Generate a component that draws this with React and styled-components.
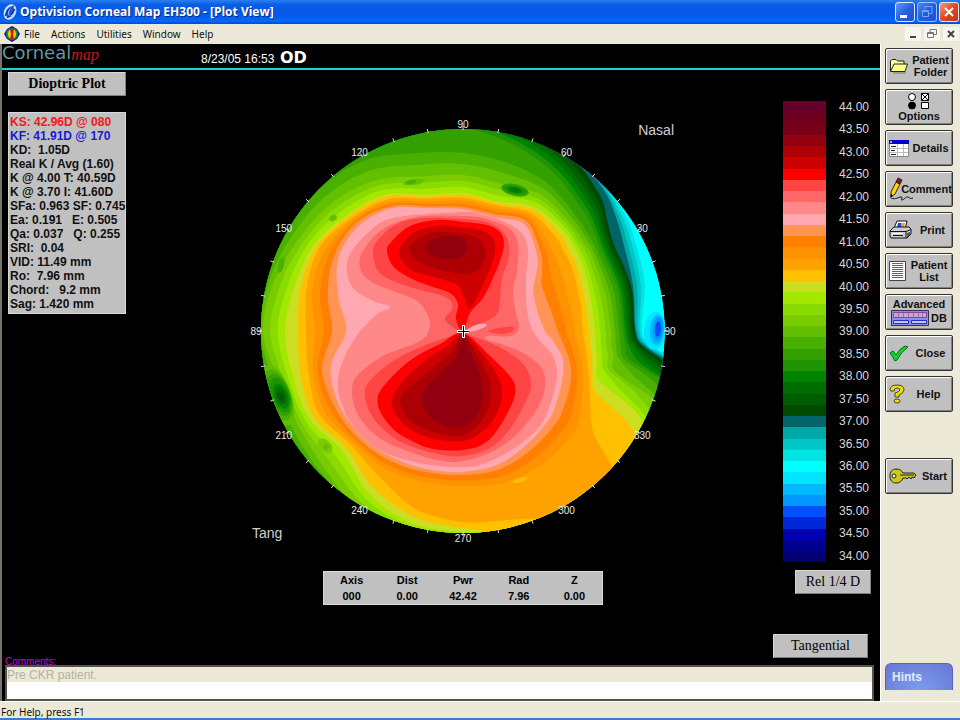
import React, { useState } from 'react';
import styled, { createGlobalStyle } from 'styled-components';

// Quarter dioptre steps, from 44.00 down to 34.00
const SCALE = [
  '#66002a', '#700020', '#7a0018', '#920010', '#ac0004', '#cc0000', '#ff0000', '#ff4444',
  '#ff6666', '#ff8888', '#ffa8b0', '#ff9454', '#ff8000', '#ff9200', '#ffa200', '#ffc000',
  '#ccdd22', '#a4e800', '#8adc00', '#7acc00', '#62c000', '#4ab000', '#34a000', '#1e9400',
  '#008400', '#006e00', '#005c00', '#004a00', '#006468', '#00a8a8', '#00c8c8', '#00e4e4',
  '#00ffff', '#00e4ff', '#00b8ff', '#0098ff', '#0050ff', '#0028d8', '#0000b0', '#000090',
  '#000070',
];

const CENTER = { x: 463, y: 330 };
const RADIUS = 202;

const ANGLES = [
  0, 15, 30, 37, 45, 60, 75, 90, 105, 120, 135, 150, 165, 180, 195, 210, 225, 240, 255, 270,
  285, 300, 315, 322, 330, 335, 340, 345, 350, 355,
];

// Distance from the apex to the outer edge of a step, one value per angle.
// Steps that are not listed are interpolated.
const RINGS = {
  10: [82, 77, 81, 91, 105, 123, 118, 122, 127, 142, 148, 144, 129, 117, 137, 144, 146, 145, 143, 141, 138, 130, 123, 118, 113, 110, 107, 103, 96, 89],
  11: [95, 90, 91, 99, 110, 127, 121, 124, 129, 144, 152, 149, 140, 131, 146, 149, 150, 149, 146, 144, 143, 137, 131, 127, 122, 119, 115, 110, 104, 99],
  13: [112, 110, 114, 117, 122, 133, 127, 130, 134, 149, 157, 160, 156, 148, 155, 160, 156, 158, 156, 155, 157, 155, 151, 147, 137, 132, 127, 123, 118, 114],
  14: [120, 121, 126, 128, 132, 136, 130, 133, 137, 152, 159, 166, 162, 157, 160, 166, 160, 168, 184, 191, 195, 212, 214, 166, 147, 140, 134, 129, 125, 122],
  15: [126, 126, 131, 133, 137, 140, 132, 136, 139, 155, 162, 169, 168, 165, 168, 172, 165, 180, 192, 197, 208, 216, 222, 214, 196, 147, 138, 134, 131, 127],
  16: [132, 132, 137, 139, 142, 143, 134, 138, 141, 157, 164, 172, 174, 178, 176, 177, 170, 188, 199, 201, 210, 218, 224, 220, 216, 190, 145, 139, 136, 133],
  19: [148, 147, 149, 150, 152, 157, 152, 156, 160, 174, 183, 188, 195, 200, 191, 190, 195, 206, 208, 208, 212, 220, 226, 224, 222, 222, 205, 158, 153, 149],
  21: [156, 156, 156, 158, 161, 170, 174, 178, 184, 197, 202, 203, 205, 206, 200, 203, 206, 210, 212, 212, 214, 222, 228, 226, 224, 224, 222, 198, 164, 158],
  22: [160, 160, 160, 164, 170, 182, 193, 203, 206, 206, 207, 208, 208, 208, 204, 208, 210, 212, 216, 216, 218, 224, 230, 228, 226, 226, 226, 215, 170, 163],
  27: [172, 174, 174, 181, 193, 208, 218, 226, 230, 230, 230, 230, 230, 230, 230, 230, 230, 230, 230, 230, 230, 230, 230, 230, 230, 230, 232, 232, 214, 181],
  28: [173, 176, 184, 191, 199, 212, 222, 230, 232, 232, 232, 232, 232, 232, 232, 232, 232, 232, 232, 232, 232, 232, 232, 232, 232, 232, 234, 234, 220, 184],
  31: [179, 188, 196, 200, 204, 222, 232, 240, 240, 240, 240, 240, 240, 240, 240, 240, 240, 240, 240, 240, 240, 240, 240, 240, 240, 240, 240, 240, 235, 193],
};

// Bow tie lobes inside the rings, largest first
const LOBES = [
  [9, [[463, 211], [393, 217], [367, 233], [350, 253], [347, 270], [353, 287], [373, 300], [390, 306], [377, 313], [365, 325], [357, 334], [345, 355], [338, 378], [340, 398], [353, 425], [377, 447], [403, 458], [437, 465], [463, 466], [483, 463], [513, 448], [540, 425], [552, 398], [557, 375], [553, 355], [540, 340], [532, 328], [527, 310], [526, 290], [526, 275], [528, 250], [522, 233], [503, 220], [483, 214]]],
  [8, [[463, 215], [417, 216], [383, 228], [363, 250], [360, 267], [370, 280], [393, 290], [417, 300], [427, 313], [430, 326], [420, 340], [383, 355], [357, 375], [352, 392], [357, 412], [373, 432], [397, 446], [437, 459], [463, 460], [493, 450], [517, 433], [537, 408], [545, 385], [540, 365], [517, 349], [488, 339], [488, 335], [510, 335], [519, 327], [516, 313], [513, 290], [517, 270], [518, 243], [510, 228], [487, 218]]],
  [7, [[463, 218], [423, 217], [397, 223], [377, 240], [373, 253], [378, 270], [393, 280], [417, 288], [437, 293], [450, 299], [452, 308], [445, 318], [454, 327], [463, 331], [475, 325], [496, 314], [500, 298], [502, 277], [509, 255], [506, 235], [490, 222]]],
  [7, [[463, 332], [423, 345], [390, 362], [368, 382], [365, 395], [370, 412], [383, 428], [403, 442], [437, 453], [463, 455], [490, 447], [510, 428], [525, 402], [531, 385], [525, 365], [503, 348], [470, 334]]],
  [7, [[488, 330], [499, 327], [513, 326], [511, 331], [500, 333]]],
  [6, [[463, 221], [437, 219], [410, 225], [392, 240], [387, 250], [393, 265], [410, 277], [430, 285], [450, 292], [458, 303], [456, 318], [463, 330], [470, 312], [483, 297], [493, 277], [500, 260], [504, 243], [500, 231], [487, 224]]],
  [6, [[463, 332], [440, 343], [412, 358], [388, 380], [378, 395], [380, 410], [393, 428], [412, 440], [433, 448], [463, 449], [485, 442], [500, 425], [513, 400], [515, 385], [508, 373], [490, 355]]],
  [5, [[463, 227], [437, 225], [413, 232], [400, 247], [402, 260], [413, 270], [437, 277], [457, 284], [465, 298], [469, 308], [480, 290], [490, 267], [495, 250], [493, 237], [480, 229]]],
  [5, [[463, 333], [447, 345], [425, 360], [403, 380], [392, 398], [395, 412], [410, 428], [433, 438], [463, 440], [483, 430], [497, 412], [502, 390], [495, 370], [480, 350]]],
  [4, [[455, 232], [430, 232], [412, 243], [411, 254], [425, 264], [450, 271], [470, 273], [483, 262], [484, 245], [475, 236]]],
  [4, [[463, 334], [452, 350], [427, 372], [402, 394], [404, 412], [418, 425], [440, 433], [463, 434], [480, 422], [490, 402], [490, 380], [478, 355]]],
  [3, [[448, 235], [430, 240], [427, 250], [440, 257], [458, 257], [467, 249], [463, 237]]],
  [3, [[463, 336], [455, 358], [440, 372], [424, 390], [423, 405], [435, 420], [452, 427], [470, 422], [482, 402], [480, 375], [470, 350]]],
  [10, [[465, 330], [476, 324], [486, 323], [485, 326], [474, 330]]],
];

// [step, cx, cy, rx, ry, rotation]
const SPOTS = [
  [20, 414, 181, 11, 3, -8], [21, 411, 181, 5, 2, -10],
  [20, 333, 217, 4, 3, -30],
  [21, 281, 264, 3, 8, 15],
  [22, 515, 189, 14, 6, 12], [23, 515, 189, 11, 4, 12], [24, 515, 189, 7, 3, 12], [25, 516, 189, 3, 1, 12],
  [20, 278, 394, 13, 32, -20], [21, 278, 394, 12, 27, -20], [22, 279, 394, 11, 22, -20],
  [23, 280, 394, 9, 18, -20], [24, 281, 395, 7, 13, -20], [25, 281, 395, 5, 9, -20], [26, 281, 396, 3, 5, -20],
  [19, 325, 445, 9, 6, 45], [20, 326, 446, 3, 3, 45],
  [15, 520, 479, 8, 2, -18],
  [33, 655, 330, 11, 19, 4], [34, 657, 329, 7, 15, 4], [35, 658, 328, 5, 12, 4], [36, 658, 328, 3, 8, 4],
];

const LEGEND_LABELS = Array.from({ length: 21 }, (_, i) => (44 - i / 2).toFixed(2));

const DIAL_LABELS = [
  [0, '90'], [30, '30'], [60, '60'], [90, '90'], [120, '120'], [150, '150'],
  [180, '89'], [210, '210'], [240, '240'], [270, '270'], [300, '300'], [330, '330'],
];

const STATS = [
  ['KS: 42.96D @ 080', '#f01818'],
  ['KF: 41.91D @ 170', '#1818d8'],
  ['KD:  1.05D'],
  ['Real K / Avg (1.60)'],
  ['K @ 4.00 T: 40.59D'],
  ['K @ 3.70 I: 41.60D'],
  ['SFa: 0.963 SF: 0.745'],
  ['Ea: 0.191   E: 0.505'],
  ['Qa: 0.037   Q: 0.255'],
  ['SRI:  0.04'],
  ['VID: 11.49 mm'],
  ['Ro:  7.96 mm'],
  ['Chord:   9.2 mm'],
  ['Sag: 1.420 mm'],
];

const READOUT = [
  ['Axis', '000'], ['Dist', '0.00'], ['Pwr', '42.42'], ['Rad', '7.96'], ['Z', '0.00'],
];

const polar = (angle, r) => {
  const a = (angle * Math.PI) / 180;
  return [CENTER.x + r * Math.cos(a), CENTER.y - r * Math.sin(a)];
};

// Closed Catmull-Rom curve through the points
const smooth = (pts) => {
  const n = pts.length;
  const at = (i) => pts[(i + n) % n];
  let d = `M${at(0)[0].toFixed(1)} ${at(0)[1].toFixed(1)}`;
  for (let i = 0; i < n; i++) {
    const [p0, p1, p2, p3] = [at(i - 1), at(i), at(i + 1), at(i + 2)];
    const c = [
      p1[0] + (p2[0] - p0[0]) / 6, p1[1] + (p2[1] - p0[1]) / 6,
      p2[0] - (p3[0] - p1[0]) / 6, p2[1] - (p3[1] - p1[1]) / 6,
      p2[0], p2[1],
    ];
    d += `C${c.map((v) => v.toFixed(1)).join(' ')}`;
  }
  return d + 'Z';
};

const ringPath = (step) => {
  const keys = Object.keys(RINGS).map(Number);
  const lo = Math.max(...keys.filter((k) => k <= step));
  const hi = Math.min(...keys.filter((k) => k >= step));
  const t = hi === lo ? 0 : (step - lo) / (hi - lo);
  return smooth(ANGLES.map((a, i) => polar(a, RINGS[lo][i] * (1 - t) + RINGS[hi][i] * t)));
};

const RING_STEPS = Array.from({ length: 22 }, (_, i) => 31 - i);

const CornealPlot = () => (
  <PlotSvg viewBox="252 120 422 421" role="img" aria-label="Corneal map">
    <defs>
      <clipPath id="cornea">
        <circle cx={CENTER.x} cy={CENTER.y} r={RADIUS} />
      </clipPath>
    </defs>
    <g clipPath="url(#cornea)">
      <circle cx={CENTER.x} cy={CENTER.y} r={RADIUS} fill={SCALE[32]} />
      {RING_STEPS.map((step) => (
        <path key={step} d={ringPath(step)} fill={SCALE[step]} />
      ))}
      {LOBES.map(([step, pts], i) => (
        <path key={i} d={smooth(pts)} fill={SCALE[step]} />
      ))}
      {SPOTS.map(([step, cx, cy, rx, ry, rot], i) => (
        <ellipse key={i} cx={cx} cy={cy} rx={rx} ry={ry} fill={SCALE[step]} transform={`rotate(${rot} ${cx} ${cy})`} />
      ))}
    </g>
    {Array.from({ length: 36 }, (_, i) => {
      const [x1, y1] = polar(i * 10, 201);
      const [x2, y2] = polar(i * 10, 205);
      return <line key={i} x1={x1} y1={y1} x2={x2} y2={y2} stroke="#e8e8e8" />;
    })}
    {DIAL_LABELS.map(([angle, text]) => {
      const [x, y] = polar(angle, 207);
      return <DialLabel key={angle} x={x} y={y + 4}>{text}</DialLabel>;
    })}
    <path d="M457 330.500h12M463.500 324v13" stroke="#fff" strokeWidth="3" />
    <path d="M458 330.500h11M463.500 325v11" stroke="#000" />
  </PlotSvg>
);

// Toolbar icons
const FolderIcon = () => (
  <svg width="20" height="16" viewBox="0 0 20 16" stroke="#222" strokeLinejoin="round">
    <path d="M1.500 13V3L3 1.500h4L8.500 3H15v3" fill="#ffffa0" />
    <path d="M1.500 13.500 5 6h13.500l-2.500 7.500z" fill="#ffff80" />
    <path d="M17 15H4" stroke="#777" />
  </svg>
);

const OptionsIcon = () => (
  <svg width="24" height="17" viewBox="0 0 24 17" stroke="#000">
    <circle cx="5" cy="4" r="3.500" fill="#fff" />
    <circle cx="5" cy="12.500" r="3.500" fill="#000" />
    <path d="M14.500.500h7v7h-7zM14.500.500l7 7M21.500.500l-7 7" fill="#fff" />
    <path d="M14.500 9.500h7v6h-7z" fill="#fff" />
  </svg>
);

const DetailsIcon = () => (
  <svg width="20" height="17" viewBox="0 0 20 17">
    <path d="M.500.500h19v16H.500z" fill="#fff" stroke="#888" />
    <path d="M0 0h20v4H0z" fill="#0000d0" />
    <path d="M1 1h2v2H1z" fill="#aac" />
    <path d="M1 8.500h18M1 12.500h18M8.500 4v12M14.500 4v12" stroke="#bbb" />
    <path d="M2 6.500h5M2 10.500h4M2 14.500h5" stroke="#222" />
  </svg>
);

const PencilIcon = () => (
  <svg width="26" height="24" viewBox="0 0 26 24" strokeLinejoin="round">
    <path d="M2 15 7 5l4 2-5 10-4 3z" fill="#ffd800" stroke="#222" />
    <path d="m7 5 2-4 4 2-2 4z" fill="#a01010" stroke="#222" />
    <path d="m1 21 1-4 2 1.500z" fill="#000" />
    <path d="M2 21c5 2 7-1 10-1s-1 3 1 3 4-4 6-3 2 2 5 1" fill="none" stroke="#111" />
  </svg>
);

const PrinterIcon = () => (
  <svg width="24" height="20" viewBox="0 0 24 20" stroke="#111" strokeLinejoin="round">
    <path d="M5 8 8 1h10l-2 8z" fill="#fff" />
    <path d="M9 3h3v4H8z" fill="#1850d0" stroke="none" />
    <path d="M12 3h4l-1 4h-3z" fill="#f0a020" stroke="none" />
    <path d="M1 11 5 7h15l2 2v5l-4 4H2l-1-2z" fill="#ccc" />
    <path d="M1 11.500h16V18M17 11.500l5-2M4 15.500h10" fill="none" />
    <path d="M3 13h11v1H3z" fill="#fff" stroke="none" />
    <path d="M18 13l3-1v3l-3 2z" fill="#555" stroke="none" />
  </svg>
);

const ListIcon = () => (
  <svg width="17" height="20" viewBox="0 0 17 20">
    <path d="M.500.500h16v19H.500z" fill="#fff" stroke="#444" />
    <path d="M3 2.500h11M3 4.500h11M3 6.500h11M3 8.500h11M3 10.500h11M3 12.500h11M3 14.500h11M3 16.500h11" stroke="#e03030" />
  </svg>
);

const DatabaseIcon = () => (
  <svg width="38" height="16" viewBox="0 0 38 16">
    <path d="M.500.500h37v15H.500z" fill="#8890e0" stroke="#334" />
    <path d="M2.500 2.500h33v5h-33z" fill="#c8a8c8" stroke="#84a" />
    <path d="M7.500 3v4M12.500 3v4M17.500 3v4M22.500 3v4M27.500 3v4M31.500 3v4" stroke="#a6a" />
    <path d="M2.500 10.500h15v3h-15zM20.500 10.500h15v3h-15z" fill="#c0c8ff" stroke="#2828d0" />
  </svg>
);

const CheckIcon = () => (
  <svg width="20" height="17" viewBox="0 0 20 17">
    <path d="M1 8 4 6l3 4Q11 3 16 1l3 1Q12 7 8 15l-2 1Q4 12 1 8z" fill="#10d818" stroke="#063" />
  </svg>
);

const QuestionIcon = () => (
  <svg width="16" height="20" viewBox="0 0 16 20" fill="#f0e000" stroke="#443" strokeLinejoin="round">
    <path d="M1 6Q1 1 8 1t7 5q0 3-5 5v2H6V9q4-1 5-3 0-2-3-2T5 7H2z" />
    <ellipse cx="8" cy="17" rx="3" ry="2" />
  </svg>
);

const KeyIcon = () => (
  <svg width="28" height="16" viewBox="0 0 28 16" fill="#d0c818" stroke="#222" strokeLinejoin="round">
    <path d="M7 1c4 0 6 2 7 4h11l2 2-2 3-2-1-1 2-2-2-2 2-1-1h-3c-1 3-3 5-7 5-4 0-6-3-6-7s2-7 6-7z" />
    <circle cx="5" cy="8" r="2" fill="#eee" />
    <path d="M11 7h14" />
  </svg>
);

const ACTIONS = [
  { lines: ['Patient', 'Folder'], Icon: FolderIcon },
  { lines: ['Options'], Icon: OptionsIcon, stacked: true },
  { lines: ['Details'], Icon: DetailsIcon },
  { lines: ['Comment'], Icon: PencilIcon, tucked: true },
  { lines: ['Print'], Icon: PrinterIcon },
  { lines: ['Patient', 'List'], Icon: ListIcon },
  { lines: ['Advanced', 'DB'], Icon: DatabaseIcon, database: true },
  { lines: ['Close'], Icon: CheckIcon },
  { lines: ['Help'], Icon: QuestionIcon },
  { lines: ['Start'], Icon: KeyIcon, spaced: true },
];

const Action = ({ lines, Icon, stacked, tucked, database, spaced }) => {
  if (database) {
    return (
      <ActionButton $stacked>
        <span>{lines[0]}</span>
        <IconRow><Icon /><span>{lines[1]}</span></IconRow>
      </ActionButton>
    );
  }
  return (
    <ActionButton $stacked={stacked} $spaced={spaced}>
      <Icon />
      <ActionLabel $tucked={tucked} $stacked={stacked}>
        {lines.map((line) => <span key={line}>{line}</span>)}
      </ActionLabel>
    </ActionButton>
  );
};

const App = () => {
  const [comment, setComment] = useState('Pre CKR patient.');

  return (
    <>
      <GlobalStyle />
      <AppWindow>
        <TitleBar>
          <svg width="16" height="18" viewBox="0 0 16 18" fill="none">
            <ellipse cx="8" cy="9" rx="5" ry="7" transform="rotate(25 8 9)" stroke="#d8e4ff" strokeWidth="2" />
            <ellipse cx="10" cy="8" rx="3" ry="5" transform="rotate(25 10 8)" stroke="#c0d0f0" />
            <path d="M3 13Q6 5 12 3M5 15q5-3 8-9" stroke="#102868" />
          </svg>
          <Title>Optivision Corneal Map EH300 - [Plot View]</Title>
          <CaptionButton aria-label="Minimize">
            <svg width="18" height="18"><path d="M4 12h7v3H4z" fill="#fff" /></svg>
          </CaptionButton>
          <CaptionButton aria-label="Restore" $dim>
            <svg width="18" height="18" fill="none" stroke="#a8c4ff"><path d="M7 6V3.500h7v7h-3M4.500 7.500h6v6h-6zM4 8.500h7" /></svg>
          </CaptionButton>
          <CaptionButton aria-label="Close window" $close>
            <svg width="18" height="18"><path d="m5 5 8 8m0-8-8 8" stroke="#fff" strokeWidth="2" /></svg>
          </CaptionButton>
        </TitleBar>

        <MenuBar>
          <svg width="16" height="16" viewBox="0 0 16 16">
            <path d="M8 0l5 3 3 5-3 5-5 3-5-3-3-5 3-5z" fill="#1818a0" />
            <circle cx="8" cy="8" r="6" fill="#109030" />
            <ellipse cx="8" cy="8" rx="4" ry="5" fill="#f0d000" />
            <path d="M6 3h4L9 8l1 5H6l1-5z" fill="#e01010" />
          </svg>
          {['File', 'Actions', 'Utilities', 'Window', 'Help'].map((item) => (
            <MenuItem key={item}>{item}</MenuItem>
          ))}
          <MenuSpacer />
          <MdiButton aria-label="Minimize view">
            <svg width="16" height="14"><path d="M5 10h6" stroke="#444" strokeWidth="2" /></svg>
          </MdiButton>
          <MdiButton aria-label="Restore view">
            <svg width="16" height="14" fill="none" stroke="#777"><path d="M6 5V2.500h6.500v5H10M3.500 5.500h6v5h-6zM3 6.500h7" /></svg>
          </MdiButton>
          <MdiButton aria-label="Close view">
            <svg width="16" height="14"><path d="m5 4 6 6m0-6-6 6" stroke="#444" strokeWidth="2" /></svg>
          </MdiButton>
        </MenuBar>

        <Workspace>
          <View>
            <ViewHeader>
              <Logo><LogoMain>Corneal</LogoMain><LogoScript>map</LogoScript></Logo>
              <ExamDate>8/23/05 16:53</ExamDate>
              <Eye>OD</Eye>
            </ViewHeader>

            <PlotLayout>
              <LeftColumn>
                <PlotButton $bold>Dioptric Plot</PlotButton>
                <Stats>
                  {STATS.map(([text, color]) => <Stat key={text} $color={color}>{text}</Stat>)}
                </Stats>
              </LeftColumn>

              <PlotColumn>
                <PlotFrame>
                  <CornealPlot />
                  <NasalLabel>Nasal</NasalLabel>
                  <TangLabel>Tang</TangLabel>
                </PlotFrame>
                <Readout>
                  <thead>
                    <tr>{READOUT.map(([name]) => <th key={name} scope="col">{name}</th>)}</tr>
                  </thead>
                  <tbody>
                    <tr>{READOUT.map(([name, value]) => <td key={name}>{value}</td>)}</tr>
                  </tbody>
                </Readout>
              </PlotColumn>

              <RightColumn>
                <Legend>
                  <Swatches>
                    {SCALE.map((color) => <Swatch key={color} $color={color} />)}
                  </Swatches>
                  <LegendLabels>
                    {LEGEND_LABELS.map((label) => <span key={label}>{label}</span>)}
                  </LegendLabels>
                </Legend>
                <ScaleButton>Rel 1/4 D</ScaleButton>
                <ModeButton>Tangential</ModeButton>
              </RightColumn>
            </PlotLayout>

            <Comments>
              <CommentsLabel htmlFor="comments">Comments:</CommentsLabel>
              <CommentsBox>
                <CommentsInput id="comments" value={comment} onChange={(e) => setComment(e.target.value)} />
              </CommentsBox>
            </Comments>
          </View>

          <Sidebar>
            {ACTIONS.map((action) => <Action key={action.lines.join(' ')} {...action} />)}
            <Hints>Hints</Hints>
          </Sidebar>
        </Workspace>

        <StatusBar>For Help, press F1</StatusBar>
      </AppWindow>
    </>
  );
};

const GlobalStyle = createGlobalStyle`
  * {
    box-sizing: border-box;
  }

  body {
    margin: 0;
    background: #ece9d8;
    font-family: "Liberation Sans", Arial, sans-serif;
  }

  button, input {
    font: inherit;
    margin: 0;
    padding: 0;
    border: 0;
  }

  svg {
    display: block;
    flex: none;
  }
`;

const AppWindow = styled.div`
  display: flex;
  flex-direction: column;
  min-height: 100vh;
`;

const TitleBar = styled.header`
  display: flex;
  align-items: center;
  gap: 2px;
  height: 24px;
  padding: 0 1px 0 2px;
  background: linear-gradient(#2a80f0, #0a5ce4 20%, #0458e8 60%, #0468fc 88%, #0448c8);
`;

const Title = styled.h1`
  flex: 1;
  margin: 0;
  color: #fff;
  font: bold 12px/20px "Open Sans", sans-serif;
  text-shadow: 1px 1px 0 #0a2c80;
`;

const CaptionButton = styled.button`
  width: 20px;
  height: 20px;
  border: 1px solid #dce8ff;
  border-radius: 3px;
  opacity: ${props => (props.$dim ? 0.7 : 1)};
  background: ${props => (props.$close
    ? 'linear-gradient(135deg, #f0a080, #e04820 50%, #c03810)'
    : 'linear-gradient(135deg, #6a98f8, #2860e0 50%, #2050d0)')};
`;

const MenuBar = styled.nav`
  display: flex;
  align-items: center;
  height: 20px;
  padding: 0 1px 0 4px;
  background: #ece9d8;
`;

const MenuItem = styled.button`
  margin-left: 4px;
  margin-right: 7px;
  background: none;
  color: #111;
  font: 10px/16px "Noto Sans", Tahoma, sans-serif;
`;

const MenuSpacer = styled.div`
  flex: 1;
`;

const MdiButton = styled.button`
  width: 16px;
  height: 14px;
  margin-left: 3px;
  background: #f6f5ee;
`;

const Workspace = styled.div`
  display: flex;
  flex: 1;
`;

const View = styled.main`
  display: flex;
  flex-direction: column;
  flex: 1;
  background: #000;
  border-left: 2px solid #77756a;
  color: #fff;
`;

const ViewHeader = styled.div`
  display: flex;
  height: 26px;
  border-bottom: 2px solid #10d8e0;
`;

const Logo = styled.div`
  display: flex;
  width: 199px;
`;

const LogoMain = styled.span`
  color: #5c9aa0;
  font: 18px/18px "DejaVu Sans", sans-serif;
`;

const LogoScript = styled.span`
  color: #d01818;
  font: italic 16px/22px "Liberation Serif", serif;
`;

const ExamDate = styled.time`
  width: 79px;
  font-size: 12px;
  line-height: 30px;
`;

const Eye = styled.strong`
  font: bold 16px/28px "DejaVu Sans", sans-serif;
`;

const PlotLayout = styled.div`
  display: grid;
  grid-template-columns: 118px 1fr 98px;
  flex: 1;
  padding: 0 9px 0 6px;
`;

const LeftColumn = styled.div`
  display: flex;
  flex-direction: column;
  gap: 16px;
  padding-top: 2px;
`;

const PlotButton = styled.button`
  height: 24px;
  background: #c0c0c0;
  border: 1px solid #d8d8d8;
  border-right-color: #808080;
  border-bottom-color: #808080;
  color: #000;
  font-family: "Liberation Serif", "Times New Roman", serif;
  font-size: 14px;
  font-weight: ${props => (props.$bold ? 'bold' : 'normal')};
`;

const ScaleButton = styled(PlotButton)`
  align-self: flex-end;
  width: 76px;
  margin-top: 8px;
`;

const ModeButton = styled(PlotButton)`
  width: 95px;
  margin-top: auto;
`;

const Stats = styled.ul`
  margin: 0;
  padding: 2px 0 2px 1px;
  list-style: none;
  background: #c0c0c0;
  border: 1px solid #d8d8d8;
`;

const Stat = styled.li`
  color: ${props => props.$color || '#111'};
  font-size: 12px;
  font-weight: bold;
  line-height: 14px;
  white-space: pre;
`;

const PlotColumn = styled.div`
  display: flex;
  flex-direction: column;
  align-items: center;
  gap: 29px;
  padding: 51px 0 0 27px;
`;

const PlotFrame = styled.div`
  display: grid;
  width: 422px;
`;

const PlotSvg = styled.svg`
  grid-area: 1 / 1;
  width: 100%;
  overflow: visible;
`;

const DialLabel = styled.text`
  fill: #e8e8e8;
  font-size: 10px;
  text-anchor: middle;
`;

const PlotLabel = styled.span`
  grid-area: 1 / 1;
  color: #d0d0d0;
  font-size: 14px;
  line-height: 18px;
`;

const NasalLabel = styled(PlotLabel)`
  align-self: start;
  justify-self: end;
`;

const TangLabel = styled(PlotLabel)`
  align-self: end;
  justify-self: start;
`;

const Readout = styled.table`
  width: 280px;
  height: 34px;
  table-layout: fixed;
  border-collapse: collapse;
  background: #c0c0c0;
  border: 1px solid #d8d8d8;
  color: #000;
  font-size: 11px;
  font-weight: bold;
  line-height: 15px;
  text-align: center;

  th, td {
    padding: 1px 0 0;
  }
`;

const RightColumn = styled.div`
  display: flex;
  flex-direction: column;
  padding-top: 31px;
`;

const Legend = styled.div`
  display: flex;
  gap: 13px;
  height: 461px;
  padding-left: 10px;
`;

const Swatches = styled.div`
  display: flex;
  flex-direction: column;
  width: 43px;
`;

const Swatch = styled.div`
  flex: 1;
  background: ${props => props.$color};
`;

const LegendLabels = styled.div`
  display: flex;
  flex-direction: column;
  justify-content: space-between;
  color: #d8d8d8;
  font-size: 12px;
  line-height: 12px;
`;

const Comments = styled.div`
  display: flex;
  flex-direction: column;
  padding: 0 6px 0 3px;
`;

const CommentsLabel = styled.label`
  color: #c010c0;
  font-size: 10px;
  line-height: 7px;
`;

const CommentsBox = styled.div`
  height: 36px;
  background: #fff;
  border: 2px solid #55534c;
`;

const CommentsInput = styled.input`
  display: block;
  width: 100%;
  height: 15px;
  background: #ece9d8;
  color: #b4b1a2;
  font-size: 12px;
  outline: none;
`;

const Sidebar = styled.aside`
  display: flex;
  flex-direction: column;
  gap: 5px;
  width: 80px;
  padding: 4px 8px 11px 4px;
  border-left: 1px solid #fff;
  background: #ece9d8;
`;

const ActionButton = styled.button`
  display: flex;
  flex-direction: ${props => (props.$stacked ? 'column' : 'row')};
  align-items: center;
  justify-content: ${props => (props.$stacked ? 'center' : 'flex-start')};
  width: 68px;
  height: 36px;
  margin-top: ${props => (props.$spaced ? '41px' : '0')};
  padding-left: ${props => (props.$stacked ? '0' : '3px')};
  background: #c0c0c0;
  border: 1px solid #333;
  border-radius: 2px;
  box-shadow: inset 1px 1px 0 #fff, inset -1px -1px 0 #808080;
  color: #111;
  font-size: 11px;
  font-weight: bold;
  line-height: 12px;
`;

// The pencil stroke runs on beneath its label, so that one is tucked over the icon
const ActionLabel = styled.span`
  display: flex;
  flex: ${props => (props.$stacked ? 'none' : '1')};
  flex-direction: column;
  align-items: center;
  margin-left: ${props => (props.$tucked ? '-14px' : '0')};
`;

const IconRow = styled.span`
  display: flex;
  align-items: center;
  gap: 2px;
`;

const Hints = styled.button`
  width: 68px;
  height: 27px;
  margin-top: auto;
  padding-left: 6px;
  background: radial-gradient(at 50% 100%, #7c9cec, #6878d4);
  border: 1px solid #5860c0;
  border-bottom: 0;
  border-radius: 6px 6px 0 0;
  color: #e4ecff;
  font-size: 12px;
  font-weight: bold;
  text-align: left;
`;

const StatusBar = styled.footer`
  height: 19px;
  padding: 3px 1px 0;
  background: #ece9d8;
  border-top: 1px solid #fff;
  border-bottom: 2px solid #3c7ccc;
  color: #111;
  font: 10px/14px "Noto Sans", Tahoma, sans-serif;
`;

export default App;
